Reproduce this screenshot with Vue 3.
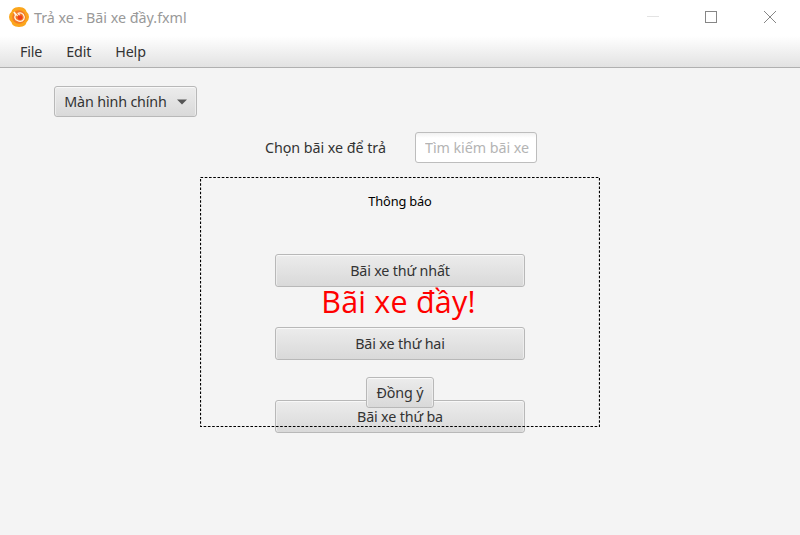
<script setup>
const menus = ['File', 'Edit', 'Help']
const lots = ['Bãi xe thứ nhất', 'Bãi xe thứ hai', 'Bãi xe thứ ba']
</script>

<template>
  <div class="window">
    <header class="titlebar">
      <svg class="logo" width="20" height="20" viewBox="0 0 20 20">
        <path d="M6.5 0.5Q10 -0.4 13.5 0.5Q17 1.8 17.4 4.6Q20 6.8 20 10Q20 13.2 17.4 15.4Q17 18.2 13.5 19.5Q10 20.4 6.5 19.5Q3 18.2 2.6 15.4Q0 13.2 0 10Q0 6.8 2.6 4.6Q3 1.8 6.5 0.5Z" fill="#fba61c" />
        <circle cx="10" cy="10" r="6.8" fill="#f47a24" />
        <path d="M4.8 5L6.6 8.2Q4.8 10 6.8 12.6L10 14.2Q13.2 14.8 14.8 12.4Q16 9.8 14.2 7.4Q12 5 9 6.4L11 8.6M5 5L8.6 8.8" fill="none" stroke="#fff3e4" stroke-width="1.2" stroke-linejoin="round" />
        <circle cx="11" cy="10.6" r="2.4" fill="#ee3e1c" />
      </svg>
      <span class="title">Trả xe - Bãi xe đầy.fxml</span>
      <svg class="controls" width="132" height="36" viewBox="0 0 132 36" fill="none">
        <path d="M5 16.5H17" stroke="#e3e3e3" />
        <rect x="63.5" y="11.5" width="11" height="11" stroke="#868686" />
        <path d="M122 11L134 23M134 11L122 23" stroke="#868686" />
      </svg>
    </header>

    <nav class="menubar">
      <span v-for="m in menus" :key="m">{{ m }}</span>
    </nav>

    <main class="content">
      <button class="btn combo">
        <span>Màn hình chính</span>
        <svg width="10" height="6" viewBox="0 0 10 6"><path d="M0 0.5H10L5 5.5Z" fill="#555" /></svg>
      </button>

      <div class="search">
        <label>Chọn bãi xe để trả</label>
        <input type="text" placeholder="Tìm kiếm bãi xe" />
      </div>

      <div class="lots">
        <button v-for="l in lots" :key="l" class="btn lot">{{ l }}</button>
      </div>

      <section class="dialog">
        <svg class="frame" width="400" height="250" viewBox="0 0 400 250">
          <rect x="0.5" y="0.5" width="399" height="249" />
        </svg>
        <h2>Thông báo</h2>
        <p>Bãi xe đầy!</p>
        <button class="btn ok">Đồng ý</button>
      </section>
    </main>
  </div>
</template>

<style>
body { background: #f4f4f4; overflow: hidden; }
</style>

<style scoped>
* { box-sizing: border-box; }
.window {
  width: 800px;
  height: 535px;
  display: flex;
  flex-direction: column;
  background: #f4f4f4;
  color: #333;
  font: 14.3px/20px "Noto Sans", "Open Sans", sans-serif;
  letter-spacing: -0.15px;
}
.titlebar {
  height: 36px;
  display: flex;
  align-items: center;
  padding: 0 26px 2px 9px;
  background: #fff;
  color: #999;
}
.logo { flex: none; }
.title { margin-left: 5px; padding-top: 2px; flex: 1; white-space: nowrap; letter-spacing: 0; }
.controls { flex: none; overflow: visible; align-self: flex-start; }
.menubar {
  height: 32px;
  display: flex;
  align-items: center;
  gap: 24px;
  padding-left: 20px;
  background: linear-gradient(#fff, #e2e2e2);
  border-bottom: 1px solid #b0b0b0;
}
.content { position: relative; flex: 1; padding: 18px 0 0; }
.btn {
  display: flex;
  align-items: center;
  justify-content: center;
  margin: 0;
  padding: 0;
  border: 1px solid #b8b8b8;
  border-radius: 3px;
  background: linear-gradient(#ececec, #d9d9d9);
  box-shadow: inset 0 1px #f8f8f8, inset 1px 0 #ededed, inset -1px 0 #ededed;
  color: #333;
  font: inherit;
  letter-spacing: inherit;
  white-space: nowrap;
}
.combo { margin-left: 54px; width: 143px; height: 31px; gap: 10px; }
.search {
  display: flex;
  align-items: center;
  margin-top: 15px;
  padding-left: 265px;
}
.search label { width: 150px; white-space: nowrap; letter-spacing: -0.05px; }
.search input {
  width: 122px;
  height: 31px;
  margin: 0;
  padding: 0 0 0 9px;
  border: 1px solid #bdbdbd;
  border-radius: 3px;
  background: linear-gradient(#f1f1f1, #fff 5px);
  font: inherit;
  letter-spacing: -0.05px;
}
.search input::placeholder { color: #b4b4b4; opacity: 1; }
.lots {
  display: flex;
  flex-direction: column;
  gap: 40px;
  align-items: center;
  margin-top: 91px;
}
.lot { width: 250px; height: 33px; }
.dialog {
  position: absolute;
  left: 200px;
  top: 109px;
  width: 400px;
  height: 250px;
  display: flex;
  flex-direction: column;
  align-items: center;
  padding-top: 15px;
}
.frame { position: absolute; inset: 0; }
.frame rect { fill: none; stroke: #000; stroke-width: 1.2; stroke-dasharray: 2.6 1.65; }
.dialog h2 {
  margin: 0;
  color: #000;
  font: 400 12.8px/18px "Noto Sans", sans-serif;
}
.dialog p {
  margin: 71px 3px 0 0;
  color: #f00;
  font: 400 30.5px/40px "Open Sans", sans-serif;
  letter-spacing: 0.2px;
  white-space: nowrap;
}
.ok { width: 68px; height: 31px; margin-top: 56px; }
</style>
